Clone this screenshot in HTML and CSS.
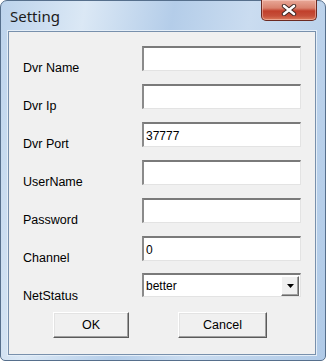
FILE: index.html
```html
<!DOCTYPE html>
<html lang="en">

<head>
    <meta charset="UTF-8">
    <meta name="viewport" content="width=device-width, initial-scale=1.0">
    <title>Setting</title>
    <link rel="stylesheet" href="styles.css">
</head>

<body>
    <div class="window">
        <div class="title-bar">
            <span class="title">Setting</span>
            <button type="button" class="close-btn" aria-label="Close">
                <svg width="16" height="12" viewBox="0 0 16 12">
                    <path d="M3 2 L13 10 M13 2 L3 10" stroke="#3a2420" stroke-width="4.4" stroke-linecap="round"/>
                    <path d="M3 2 L13 10 M13 2 L3 10" stroke="#ffffff" stroke-width="2.6" stroke-linecap="round"/>
                </svg>
            </button>
        </div>

        <div class="client">
            <form class="settings-form" onsubmit="return false;">
                <label for="dvrName">Dvr Name</label>
                <input type="text" id="dvrName">

                <label for="dvrIp">Dvr Ip</label>
                <input type="text" id="dvrIp">

                <label for="dvrPort">Dvr Port</label>
                <input type="text" id="dvrPort" value="37777">

                <label for="userName">UserName</label>
                <input type="text" id="userName">

                <label for="password">Password</label>
                <input type="password" id="password">

                <label for="channel">Channel</label>
                <input type="text" id="channel" value="0">

                <label for="netStatus">NetStatus</label>
                <div class="combo" id="netStatus">
                    <span class="combo-value">better</span>
                    <span class="combo-arrow">
                        <svg width="7" height="4" viewBox="0 0 7 4"><path d="M0 0 H7 L3.5 4 Z" fill="#000"/></svg>
                    </span>
                </div>
            </form>

            <div class="button-panel">
                <button type="submit" class="btn btn-ok">OK</button>
                <button type="button" class="btn btn-cancel">Cancel</button>
            </div>
        </div>
    </div>
</body>

</html>
```

FILE: styles.css
```css
/* General Styles */
body {
    margin: 0;
    background-color: #ffffff;
    font-family: "Liberation Sans", Arial, sans-serif;
}

.window {
    width: 326px;
    height: 361px;
    box-sizing: border-box;
    border: 1px solid #566f8c;
    border-radius: 7px 7px 5px 5px;
    padding: 0 9px 5px 7px;
    background: linear-gradient(100deg, #bcd3ec 0%, #dbe8f5 22%, #b4cde9 45%, #cadcf0 65%, #b0cae7 100%);
    display: flex;
    flex-direction: column;
}

/* Title bar */
.title-bar {
    height: 30px;
    display: flex;
    justify-content: space-between;
    align-items: flex-start;
}

.title {
    font-family: "Noto Sans", "Open Sans", sans-serif;
    font-size: 15px;
    color: #1b1b1b;
    margin: 4px 0 0 2px;
    line-height: 22px;
}

.close-btn {
    width: 56px;
    height: 21px;
    margin: -1px -1px 0 0;
    padding: 0;
    border: 1px solid #6b2a22;
    border-top: none;
    border-radius: 0 0 5px 5px;
    background: linear-gradient(#e8a898 0%, #d9826e 40%, #c13f2b 55%, #c6503a 80%, #dc7c5c 100%);
    box-shadow: inset 0 0 0 1px rgba(255, 220, 210, 0.45);
    display: flex;
    align-items: center;
    justify-content: center;
}

/* Client area */
.client {
    flex: 1;
    background-color: #f0f0f0;
    border: 1px solid #7890ac;
    box-shadow: 0 0 0 1px #e4eef8;
    padding: 14px 0 0 14px;
}

.settings-form {
    display: grid;
    grid-template-columns: 119px 159px;
    grid-auto-rows: 25px;
    row-gap: 13px;
}

label {
    align-self: end;
    font-size: 12.5px;
    line-height: 14px;
    color: #000;
    margin-bottom: -4px;
}

input[type="text"],
input[type="password"],
.combo {
    box-sizing: border-box;
    width: 159px;
    height: 25px;
    margin: 0;
    padding: 2px 2px 0;
    background-color: #fff;
    border-style: solid;
    border-width: 2px 1px 1px 2px;
    border-color: #7a7a7a #e3e3e3 #e3e3e3 #8a8a8a;
    font-family: "Liberation Sans", Arial, sans-serif;
    font-size: 12px;
    color: #000;
    outline: none;
}

.combo {
    height: 24px;
    display: flex;
    align-items: center;
    justify-content: space-between;
    padding: 0 1px 0 2px;
    margin-top: -1px;
}

.combo-value {
    line-height: 14px;
}

.combo-arrow {
    width: 18px;
    height: 20px;
    box-sizing: border-box;
    background-color: #f0f0f0;
    border-style: solid;
    border-width: 1px;
    border-color: #ffffff #696969 #696969 #ffffff;
    box-shadow: inset -1px -1px 0 #a0a0a0;
    display: flex;
    align-items: center;
    justify-content: center;
}

/* Buttons */
.button-panel {
    display: flex;
    margin: 13px 0 0 30px;
    gap: 49px;
}

.btn {
    height: 26px;
    padding: 0;
    background-color: #f0f0f0;
    border-style: solid;
    border-width: 1px;
    border-color: #ffffff #5a5a5a #5a5a5a #ffffff;
    box-shadow: inset -1px -1px 0 #a0a0a0, inset 1px 1px 0 #e3e3e3;
    font-family: "Liberation Sans", Arial, sans-serif;
    font-size: 12.5px;
    color: #000;
}

.btn-ok {
    width: 76px;
}

.btn-cancel {
    width: 89px;
}
```
